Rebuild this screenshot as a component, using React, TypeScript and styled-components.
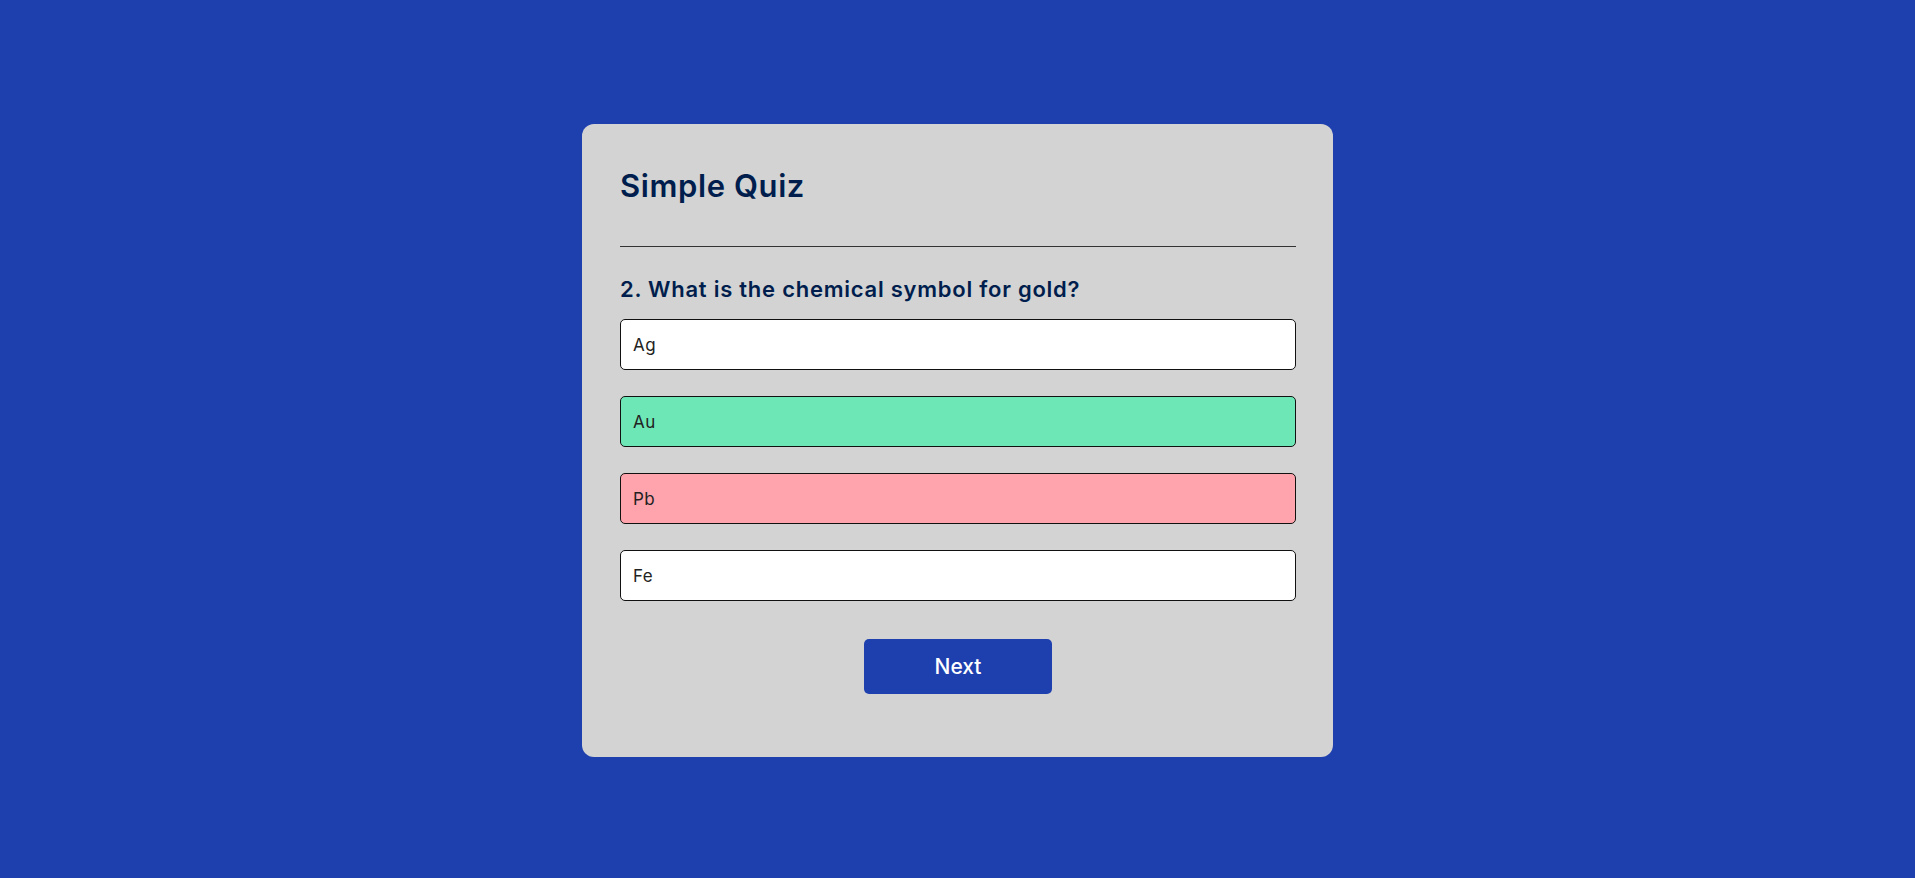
import React, { useState } from 'react'
import styled, { createGlobalStyle } from 'styled-components'

const GlobalStyle = createGlobalStyle`
  * {
    margin: 0;
    padding: 0;
    box-sizing: border-box;
    font-family: 'Inter', 'Open Sans', sans-serif;
  }
  body {
    background: #1e40af;
  }
`

const Page = styled.div`
  min-height: 100vh;
  background: #1e40af;
  padding-top: 124px;
`

const Card = styled.div`
  width: 751px;
  margin: 0 auto;
  background: #d3d3d3;
  border-radius: 12px;
  padding: 38px 37px 63px 38px;
`

const Title = styled.h1`
  font-size: 31px;
  font-weight: 600;
  line-height: 47px;
  letter-spacing: 0.6px;
  color: #001e4d;
  padding-bottom: 37px;
  border-bottom: 1px solid #333;
`

const Quiz = styled.div`
  padding: 25px 0 38px;
`

const Question = styled.h2`
  font-size: 22px;
  font-weight: 600;
  line-height: 34px;
  letter-spacing: 0.75px;
  color: #001e4d;
`

const Answers = styled.div`
  display: flex;
  flex-direction: column;
  gap: 26px;
  margin-top: 13px;
`

const Answer = styled.button<{ $state?: 'correct' | 'incorrect' }>`
  width: 100%;
  height: 51px;
  padding: 0 12px;
  text-align: left;
  font-size: 17px;
  font-weight: 400;
  letter-spacing: 0.4px;
  color: #222;
  border: 1px solid #111;
  border-radius: 5px;
  cursor: pointer;
  background: ${({ $state }) =>
    $state === 'correct' ? '#6ee7b7' : $state === 'incorrect' ? '#ffa3ac' : '#fff'};
`

const NextButton = styled.button`
  display: block;
  width: 188px;
  height: 55px;
  margin: 0 auto;
  background: #1e40af;
  color: #fff;
  font-size: 21px;
  font-weight: 500;
  border: 0;
  border-radius: 5px;
  cursor: pointer;
`

const answers = [
  { text: 'Ag', correct: false },
  { text: 'Au', correct: true },
  { text: 'Pb', correct: false },
  { text: 'Fe', correct: false },
]

export default function App() {
  const [picked] = useState(2)

  return (
    <>
      <GlobalStyle />
      <Page>
        <Card>
          <Title>Simple Quiz</Title>
          <Quiz>
            <Question>2. What is the chemical symbol for gold?</Question>
            <Answers>
              {answers.map((a, i) => {
                let state: 'correct' | 'incorrect' | undefined
                if (a.correct) state = 'correct'
                else if (i === picked) state = 'incorrect'
                return (
                  <Answer key={a.text} $state={state}>
                    {a.text}
                  </Answer>
                )
              })}
            </Answers>
          </Quiz>
          <NextButton>Next</NextButton>
        </Card>
      </Page>
    </>
  )
}
